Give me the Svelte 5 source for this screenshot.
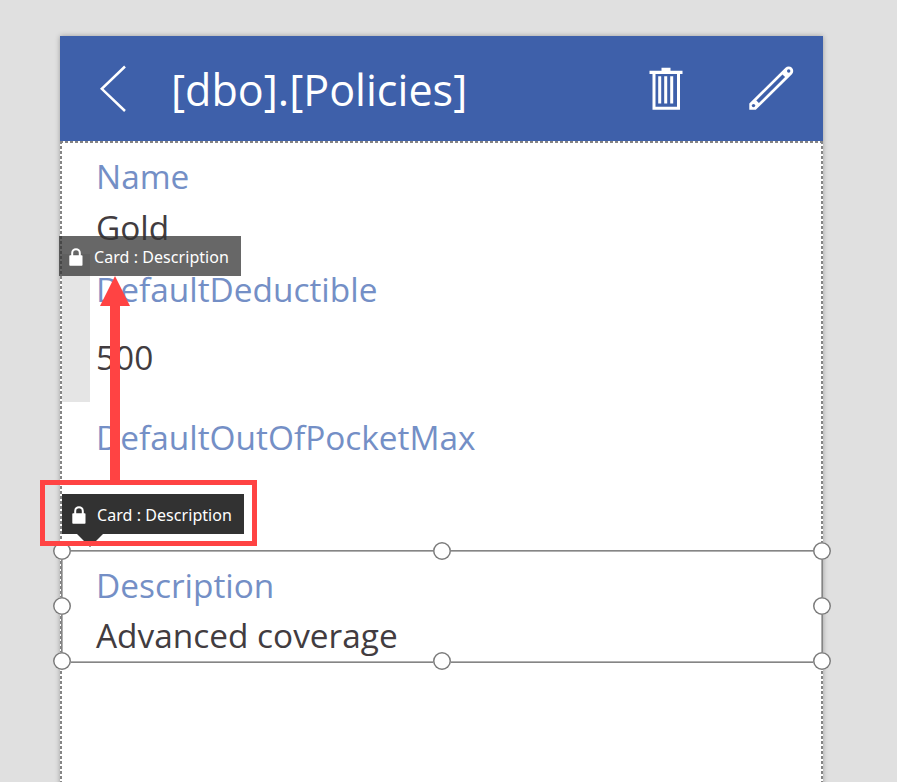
<script>
  const fields = [
    { label: 'Name', value: 'Gold', top: 15, gap: 11 },
    { label: 'DefaultDeductible', value: '500', top: 22, gap: 28 },
    { label: 'DefaultOutOfPocketMax', value: '', top: 40, gap: 0 },
    { label: 'Description', value: 'Advanced coverage', top: 68, gap: 10 }
  ];
  const handles = [
    [62, 551], [442, 551], [822, 551],
    [62, 606], [822, 606],
    [62, 661], [442, 661], [822, 661]
  ];
</script>

{#snippet lock()}
  <svg class="lock" width="14" height="18" viewBox="0 0 14 18">
    <path d="M3.2 9V5a3.8 3.8 0 0 1 7.6 0V9" fill="none" stroke="#fff" stroke-width="2" />
    <rect x="0.3" y="7.3" width="13.2" height="10.4" rx="0.8" fill="#fff" />
  </svg>
{/snippet}

<div class="stage">
  <main class="screen">
    <header>
      <svg class="back" width="28" height="50" viewBox="0 0 28 50">
        <path d="M26 2.5 2.8 24.8 26 47" fill="none" stroke="#fff" stroke-width="2.5" />
      </svg>
      <h1>[dbo].[Policies]</h1>
      <svg class="trash" width="34" height="44" viewBox="0 0 34 44">
        <path d="M12.5 .7h9v3h-9zM.5 3.7h33v3.3H.5z" fill="#fff" />
        <path d="M5 6v35.3h24.5V6" fill="none" stroke="#fff" stroke-width="3" />
        <path d="M10.7 9.2v27.3M16.7 9.2v27.3M22.7 9.2v27.3" stroke="#fff" stroke-width="3" />
      </svg>
      <svg class="pencil" width="46" height="46" viewBox="0 0 46 46">
        <path d="M1.3 43.8V37.6L37.5 1.8a4.5 4.5 0 0 1 6.4 6.4L7.8 43.8z" fill="#fff" />
        <path d="M9.6 35.7 35.8 9.8" stroke="#3e60aa" stroke-width="3.7" />
        <circle cx="40.7" cy="5" r="1.7" fill="#3e60aa" />
        <circle cx="5.5" cy="39.6" r="1.7" fill="#3e60aa" />
      </svg>
    </header>
    <section class="form">
      {#each fields as field}
        <div class="card" style="padding-top:{field.top}px">
          <div class="label">{field.label}</div>
          <div class="value" style="margin-top:{field.gap}px">{field.value}</div>
        </div>
      {/each}
    </section>
  </main>

  <div class="ghost"></div>
  <div class="selection"></div>
  <div class="tag active">{@render lock()}<span>Card : Description</span></div>
  {#each handles as [x, y]}
    <i class="handle" style="left:{x - 9}px;top:{y - 9}px"></i>
  {/each}
  <div class="tag moved">{@render lock()}<span>Card : Description</span></div>
  <div class="highlight"></div>
  <svg class="arrow" width="30" height="206" viewBox="0 0 30 206">
    <path d="M15 0 30 30H20V206H10V30H0z" fill="#ff4343" />
  </svg>
</div>

<style>
  :global(body) { background: #e0e0e0; }
  .stage {
    position: relative;
    box-sizing: border-box;
    width: 897px;
    height: 782px;
    padding: 36px 0 0 60px;
    overflow: hidden;
    background: #e0e0e0;
    font-family: 'Open Sans', 'Noto Sans', sans-serif;
  }
  .screen {
    width: 763px;
    height: 760px;
    background: #fff;
    box-shadow: 0 0 5px rgba(0, 0, 0, 0.3);
  }
  header {
    display: flex;
    align-items: center;
    box-sizing: border-box;
    height: 105px;
    padding: 0 29px 0 39px;
    background: #3e60aa;
    color: #fff;
  }
  h1 {
    flex: 1;
    margin: 2px 0 0 44px;
    font-size: 43.1px;
    font-weight: 400;
    line-height: 60px;
    white-space: nowrap;
  }
  .trash { margin: 0 65px 0 0; }
  .form {
    box-sizing: border-box;
    height: 700px;
    padding-left: 36px;
    background:
      repeating-linear-gradient(90deg, #858585 0 3px, #fff 3px 5px) 0 0 / 100% 2px no-repeat,
      repeating-linear-gradient(#858585 0 3px, #fff 3px 5px) 0 0 / 2px 100% no-repeat,
      repeating-linear-gradient(#858585 0 3px, #fff 3px 5px) 100% 0 / 2px 100% no-repeat,
      #fff;
  }
  .label, .value {
    height: 40px;
    font-size: 33.4px;
    line-height: 40px;
    white-space: nowrap;
  }
  .label { color: #748fc6; }
  .value { color: #423c40; }
  .ghost {
    position: absolute;
    left: 62px;
    top: 254px;
    width: 28px;
    height: 148px;
    background: #e5e5e5;
  }
  .selection {
    position: absolute;
    box-sizing: border-box;
    left: 61px;
    top: 550px;
    width: 762px;
    height: 113px;
    border: 1px solid #858585;
    box-shadow: inset 0 0 0 1px #b0b0b0;
  }
  .handle {
    position: absolute;
    box-sizing: border-box;
    width: 18px;
    height: 18px;
    border-radius: 50%;
    background: #fff;
    box-shadow: inset 0 0 0 1.5px #7c7c7c;
  }
  .tag {
    position: absolute;
    display: flex;
    align-items: center;
    box-sizing: border-box;
    width: 182px;
    height: 40px;
    padding-left: 10px;
    background: #323232;
    color: #fff;
    font-family: 'Noto Sans', 'Open Sans', sans-serif;
    font-size: 16px;
    letter-spacing: 0.06px;
    white-space: nowrap;
  }
  .tag span { margin: 2px 0 0 11px; }
  .tag .lock { margin-top: 1px; }
  .active { left: 62px; top: 494px; }
  .active::after {
    content: '';
    position: absolute;
    left: 14px;
    top: 39px;
    width: 28px;
    height: 14px;
    background: #323232;
    clip-path: polygon(0 0, 100% 0, 50% 100%);
  }
  .moved { left: 59px; top: 236px; background: rgba(50, 50, 50, 0.74); }
  .highlight {
    position: absolute;
    box-sizing: border-box;
    left: 40px;
    top: 480px;
    width: 217px;
    height: 66px;
    border: 5px solid #ff4343;
  }
  .arrow { position: absolute; left: 100px; top: 276px; }
</style>
